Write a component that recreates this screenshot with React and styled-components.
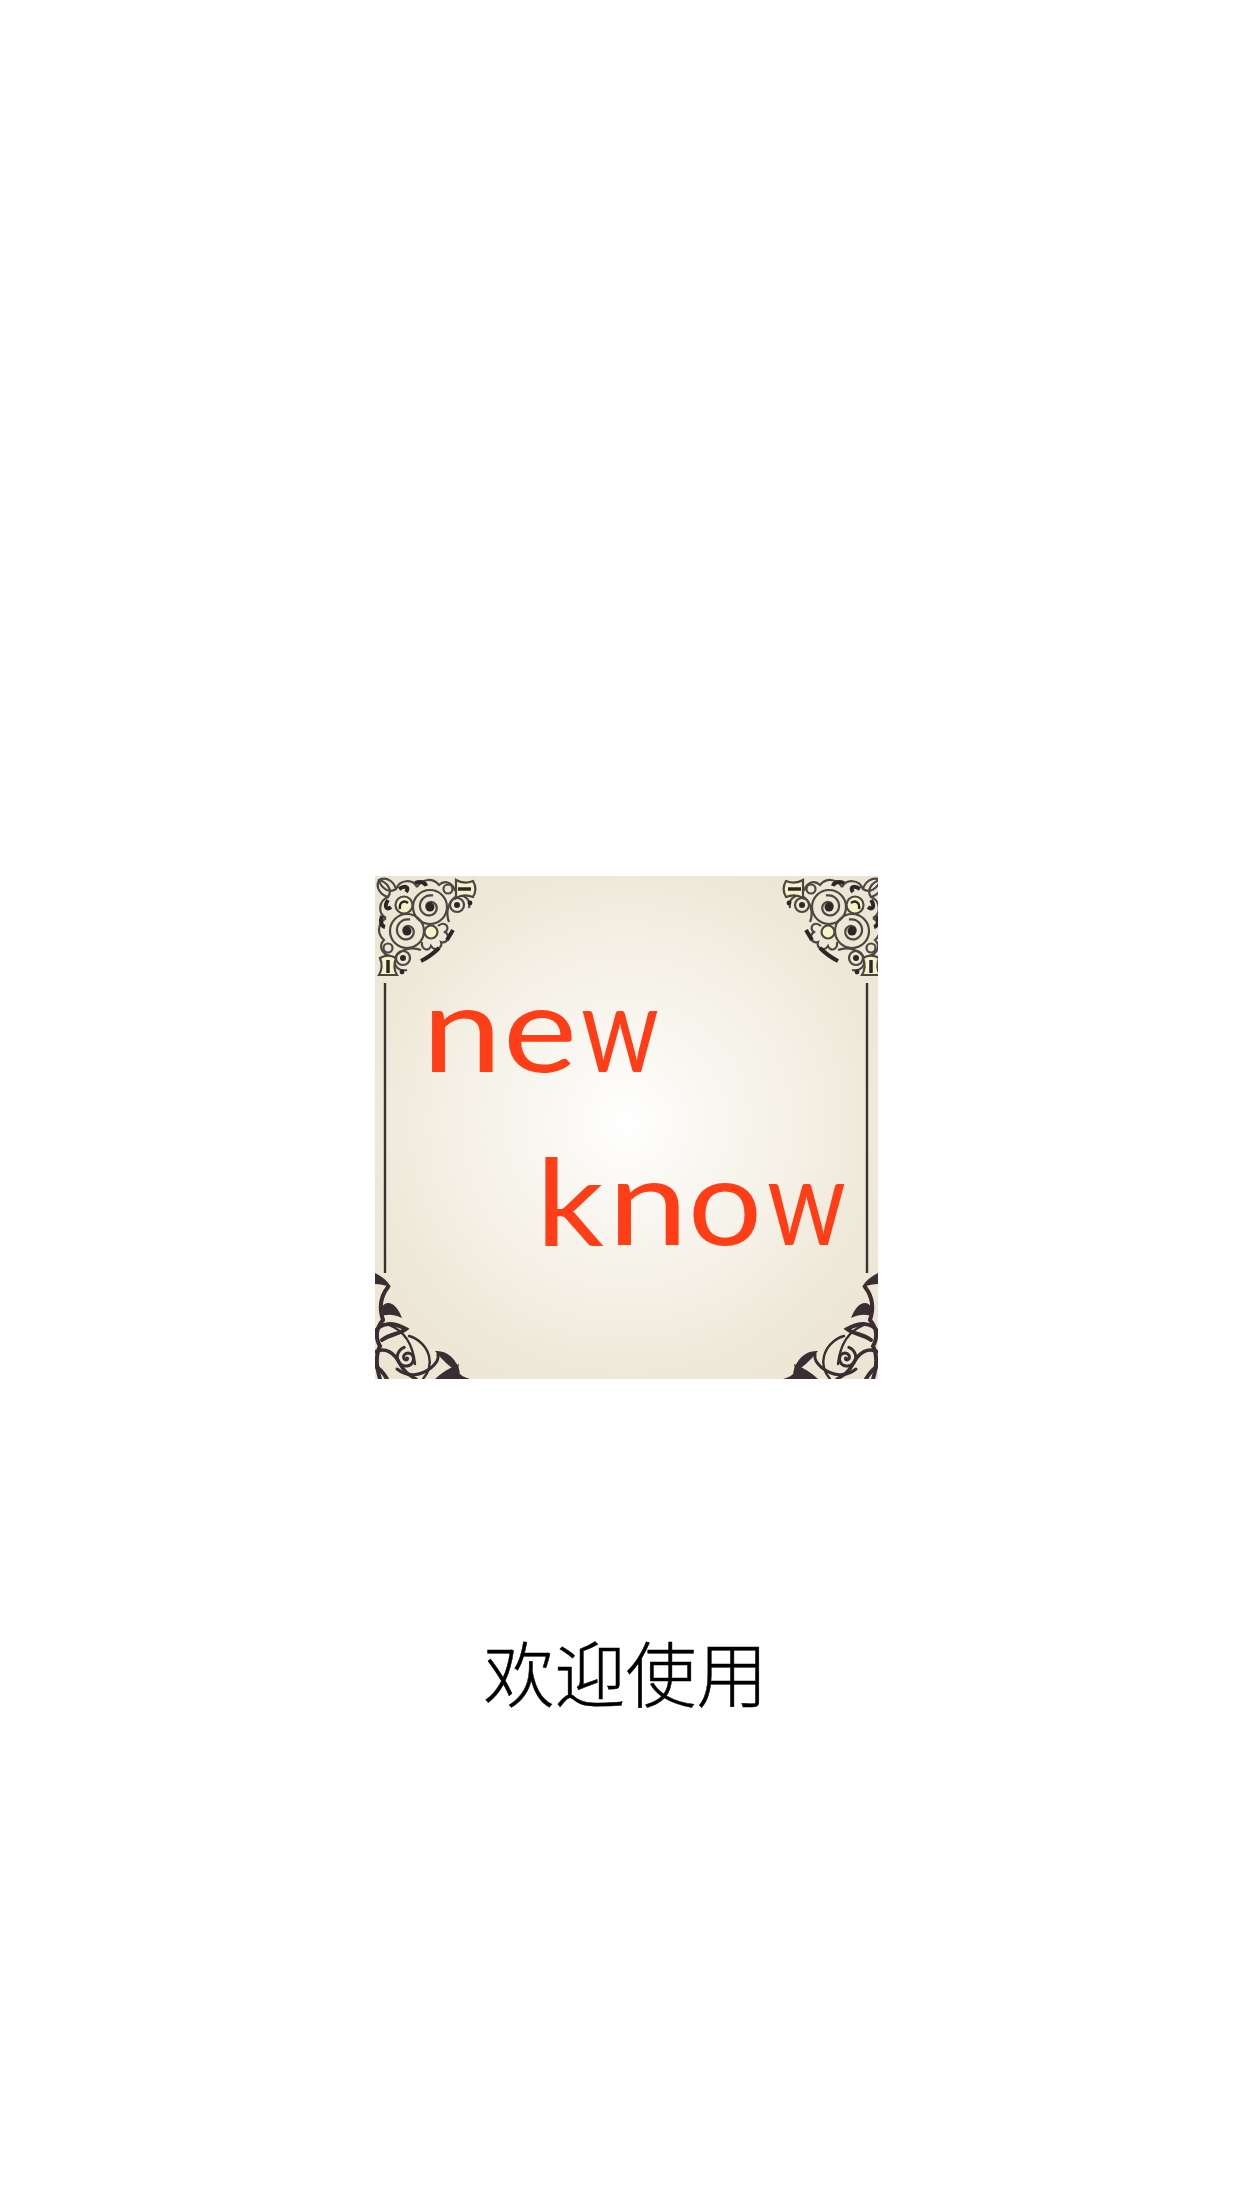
import React from "react";
import styled, { createGlobalStyle } from "styled-components";

const Global = createGlobalStyle`
  html, body {
    margin: 0;
    background: #fff;
  }
`;

const Page = styled.div`
  width: 1242px;
  height: 2208px;
  padding-top: 876px;
  box-sizing: border-box;
  display: flex;
  flex-direction: column;
  align-items: center;
  background: linear-gradient(#fff 70%, #fefefe);
`;

const Logo = styled.svg`
  display: block;
  width: 503px;
  height: 503px;
  margin-left: 11px;
  background: radial-gradient(
    circle at 50% 49%,
    #fff 0,
    #faf8f3 20%,
    #f5f1e7 46%,
    #eee8d8 72%,
    #ebe4d2 100%
  );
`;

const Word = styled.text`
  font-family: "Lato", "Noto Sans", sans-serif;
  font-size: 120px;
  fill: #ff3c14;
`;

const Caption = styled.div`
  margin-top: 241px;
  margin-left: 9px;
  font-family: "Noto Sans CJK SC", sans-serif;
  font-size: 71px;
  font-weight: 300;
  line-height: 100px;
  color: #000;
  -webkit-text-stroke: 0.5px #000;
`;

// spiral from the centre outwards, used by the top ornaments
const spiral = (cx, cy, r, turns) => {
  const pts = [];
  const steps = Math.round(turns * 24);
  for (let i = 0; i <= steps; i++) {
    const a = (i / 24) * Math.PI * 2;
    const d = (r * i) / steps;
    pts.push(`${(cx + Math.cos(a) * d).toFixed(1)} ${(cy + Math.sin(a) * d).toFixed(1)}`);
  }
  return "M" + pts.join("L");
};

const Keyhole = ({ x, y, rotate }) => (
  <g transform={`translate(${x} ${y}) rotate(${rotate})`}>
    <path d="M-8 -9C-3 -12 3 -12 8 -9C6 -4 6 3 9 8L-9 8C-6 3 -6 -4 -8 -9Z" fill="#f6f1c8" stroke="#4a4440" strokeWidth="2.2" />
    <path d="M0 -7L0 6" stroke="#2e2826" strokeWidth="3.5" />
  </g>
);

const TopCorner = () => (
  <g fill="none" stroke="#4d4743" strokeWidth="2.2">
    <circle cx="55" cy="31" r="17" />
    <path d={spiral(55, 31, 12, 1.8)} />
    <circle cx="55" cy="31" r="4.5" fill="#2e2826" stroke="none" />
    <circle cx="32" cy="55" r="17" />
    <path d={spiral(32, 55, 12, 1.8)} />
    <circle cx="32" cy="55" r="4.5" fill="#2e2826" stroke="none" />
    <circle cx="29" cy="29" r="8.5" fill="#f6f3c9" />
    <path d="M25 33C24 26 29 24 33 27" stroke="#2e2826" strokeWidth="2.4" />
    <circle cx="56" cy="56" r="6.5" fill="#f6f3c9" />
    <path d="M63 50C70 44 76 52 70 56C76 60 72 68 66 66C68 72 60 76 56 70C54 76 46 74 47 66" />
    <circle cx="82" cy="29" r="7" />
    <circle cx="82" cy="29" r="3" fill="#2e2826" stroke="none" />
    <circle cx="28" cy="82" r="7" />
    <circle cx="28" cy="82" r="3" fill="#2e2826" stroke="none" />
    <path d="M4 4C12 0 19 6 21 13C14 18 6 12 4 4ZM21 13C25 3 38 3 42 11M42 11C48 2 58 2 64 9C70 3 78 7 80 15" />
    <path d="M4 4C0 12 6 19 13 21C18 14 12 6 4 4ZM13 21C3 25 3 38 11 42M11 42C2 48 2 58 9 64C3 70 7 78 15 80" />
    <path d="M74 46C70 36 74 24 82 20C90 18 96 24 94 32M46 74C36 70 24 74 20 82C18 90 24 96 32 94" />
    <path d="M13 24C9 30 11 35 16 31M24 13C30 9 35 11 31 16" stroke="#2e2826" strokeWidth="4" />
    <path d="M7 40C5 45 6 50 10 51M40 7C45 5 50 6 51 10" stroke="#2e2826" strokeWidth="4" />
    <path d="M64 72C58 78 52 82 46 85M72 64L78 54" stroke="#2e2826" strokeWidth="4" />
    <circle cx="95" cy="27" r="2.4" fill="#2e2826" stroke="none" />
    <circle cx="27" cy="96" r="2.4" fill="#2e2826" stroke="none" />
    <circle cx="73" cy="13" r="4.5" />
    <circle cx="13" cy="72" r="4.5" />
    <Keyhole x={89} y={13} rotate={90} />
    <Keyhole x={13} y={91} rotate={0} />
  </g>
);

const BottomCorner = () => (
  <g fill="none" stroke="#3a2d30" strokeWidth="3" strokeLinecap="round">
    <path d="M0 397C6 400 12 404 16 411C9 409 4 408 0 408Z" fill="#3a2d30" stroke="none" />
    <path d="M13 411C6 420 4 432 8 444" strokeWidth="4" />
    <path d="M6 432C12 422 22 428 27 442C18 438 11 438 5 441Z" fill="#3a2d30" stroke="none" />
    <path d="M0 456C6 446 18 446 31 453C25 458 15 458 7 464" strokeWidth="4" />
    <path d="M8 444C1 452 0 462 5 470C1 478 1 490 5 503" strokeWidth="4" />
    <path d="M14 449C30 455 38 470 40 488" strokeWidth="2.4" />
    <path d="M0 476C10 471 19 476 25 488C28 494 33 499 41 503" strokeWidth="3.5" />
    <path d={spiral(32, 482, 11, 1.7)} strokeWidth="3" />
    <path d="M34 460C45 463 52 472 54 480C56 488 54 496 48 503" strokeWidth="2.4" />
    <path d="M22 493C32 501 45 501 57 491C61 487 64 484 63 478" strokeWidth="3" />
    <path d="M60 475C72 474 82 483 85 497C76 492 68 485 60 475Z" fill="#3a2d30" stroke="none" />
    <path d="M84 488C82 496 84 500 95 503L60 503C66 497 74 492 84 488Z" fill="#3a2d30" stroke="none" />
    <path d="M12 503C8 496 4 492 0 490" strokeWidth="4" />
  </g>
);

// each glyph gets its slot: [x, advance width]
const Glyphs = ({ y, letters }) => (
  <Word y={y}>
    {letters.map(([ch, x, len], i) => (
      <tspan key={i} x={x} textLength={len} lengthAdjust="spacingAndGlyphs">
        {ch}
      </tspan>
    ))}
  </Word>
);

const App = () => (
  <Page>
    <Global />
    <Logo viewBox="0 0 503 503" xmlns="http://www.w3.org/2000/svg">
      <defs>
        <filter id="soft" x="-5%" y="-5%" width="110%" height="110%">
          <feGaussianBlur stdDeviation="0.7" />
        </filter>
      </defs>
      <g filter="url(#soft)">
        <TopCorner />
        <g transform="translate(509 0) scale(-1 1)">
          <TopCorner />
        </g>
        <BottomCorner />
        <g transform="translate(503 0) scale(-1 1)">
          <BottomCorner />
        </g>
        <path d="M10 107V397M492 107V397" stroke="#3b3331" strokeWidth="2.4" />
        <Glyphs y={196} letters={[["n", 47, 80], ["e", 128, 74], ["w", 206, 78]]} />
        <Glyphs y={369} letters={[["k", 161, 68], ["n", 233, 80], ["o", 313, 74], ["w", 392, 79]]} />
      </g>
    </Logo>
    <Caption>欢迎使用</Caption>
  </Page>
);

export default App;
